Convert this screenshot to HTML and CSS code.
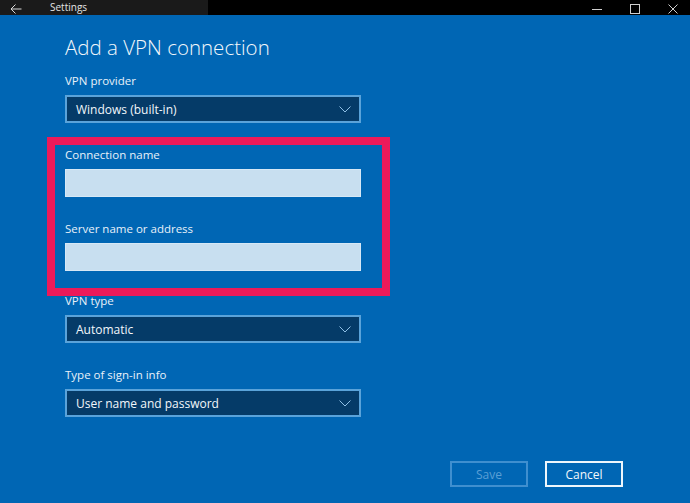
FILE: index.html
```html
<!DOCTYPE html>
<html lang="en">
<head>
    <meta charset="UTF-8">
    <meta name="viewport" content="width=device-width, initial-scale=1.0">
    <title>Settings - Add a VPN connection</title>
    <link rel="stylesheet" href="styles.css">
</head>
<body>
    <div class="titlebar">
        <div class="titlebar-app">
            <svg class="back" width="12" height="10" viewBox="0 0 12 10">
                <path d="M11.5 5H1M5.5 0.5L1 5l4.5 4.5" fill="none" stroke="#d8d8d8" stroke-width="1"/>
            </svg>
            <span class="app-name">Settings</span>
        </div>
        <div class="titlebar-controls">
            <svg width="10" height="10" viewBox="0 0 10 10"><path d="M0 5.5h10" stroke="#cfcfcf" stroke-width="1"/></svg>
            <svg width="10" height="10" viewBox="0 0 10 10"><rect x="0.5" y="0.5" width="9" height="9" fill="none" stroke="#cfcfcf" stroke-width="1"/></svg>
            <svg width="10" height="10" viewBox="0 0 10 10"><path d="M0.5 0.5l9 9M9.5 0.5l-9 9" stroke="#cfcfcf" stroke-width="1"/></svg>
        </div>
    </div>

    <div class="page">
        <h1 class="title">Add a VPN connection</h1>

        <div class="form">
            <div class="field">
                <label>VPN provider</label>
                <div class="select">
                    <span>Windows (built-in)</span>
                    <svg class="chevron" width="12" height="7" viewBox="0 0 12 7"><path d="M0.5 0.5L6 6l5.5-5.5" fill="none" stroke="#8fc0e6" stroke-width="1"/></svg>
                </div>
            </div>

            <div class="highlight">
                <div class="field">
                    <label>Connection name</label>
                    <div class="input"></div>
                </div>
                <div class="field">
                    <label>Server name or address</label>
                    <div class="input"></div>
                </div>
            </div>

            <div class="field">
                <label>VPN type</label>
                <div class="select">
                    <span>Automatic</span>
                    <svg class="chevron" width="12" height="7" viewBox="0 0 12 7"><path d="M0.5 0.5L6 6l5.5-5.5" fill="none" stroke="#8fc0e6" stroke-width="1"/></svg>
                </div>
            </div>

            <div class="field">
                <label>Type of sign-in info</label>
                <div class="select">
                    <span>User name and password</span>
                    <svg class="chevron" width="12" height="7" viewBox="0 0 12 7"><path d="M0.5 0.5L6 6l5.5-5.5" fill="none" stroke="#8fc0e6" stroke-width="1"/></svg>
                </div>
            </div>
        </div>
    </div>

    <div class="actions">
        <button class="btn btn-disabled">Save</button>
        <button class="btn">Cancel</button>
    </div>
</body>
</html>
```

FILE: styles.css
```css
* {
    margin: 0;
    padding: 0;
    box-sizing: border-box;
}

html, body {
    height: 100%;
}

body {
    font-family: "Open Sans", "Noto Sans", sans-serif;
    background: #0066b4;
    color: #eaf3fa;
    overflow: hidden;
}

.titlebar {
    display: flex;
    height: 15px;
    background: #000;
    overflow: hidden;
}

.titlebar-app {
    display: flex;
    align-items: center;
    width: 208px;
    background: #1a1a1a;
}

.back {
    margin: 3px 0 0 10px;
}

.app-name {
    margin-left: 28px;
    font-size: 10px;
    line-height: 15px;
    color: #e4e4e4;
}

.titlebar-controls {
    flex: 1;
    display: flex;
    justify-content: flex-end;
    align-items: center;
    gap: 28px;
    padding: 3px 12px 0 0;
}

.page {
    padding: 0 65px;
}

.title {
    margin-top: 19px;
    font-size: 20.5px;
    font-weight: 300;
    line-height: 27px;
    color: #f2f7fb;
}

.form {
    display: flex;
    flex-direction: column;
    gap: 23px;
    width: 296px;
    margin-top: 11px;
}

.field {
    display: flex;
    flex-direction: column;
    gap: 6px;
}

.field label {
    font-size: 11.5px;
    line-height: 17px;
    color: #e8f1f9;
}

.select {
    display: flex;
    align-items: center;
    justify-content: space-between;
    height: 28px;
    padding: 0 8px 0 9px;
    background: #053b68;
    border: 2px solid #5aa3da;
    font-size: 12px;
    color: #f2f7fb;
}

.input {
    height: 28px;
    background: #c8dff0;
    border: 1px solid #d6e8f6;
}

.highlight {
    display: flex;
    flex-direction: column;
    gap: 23px;
    margin: -9px -29px -27px -18px;
    padding: 1px 21px 17px 10px;
    border: 8px solid #ec1a5a;
}

.actions {
    display: flex;
    justify-content: flex-end;
    gap: 17px;
    padding-right: 67px;
    margin-top: 44px;
}

.btn {
    width: 78px;
    height: 26px;
    background: transparent;
    border: 2px solid #eef6fc;
    font-family: "Open Sans", "Noto Sans", sans-serif;
    font-size: 12px;
    color: #f2f7fb;
}

.btn-disabled {
    border-color: #3f8fcf;
    color: #5a9fd5;
}
```
